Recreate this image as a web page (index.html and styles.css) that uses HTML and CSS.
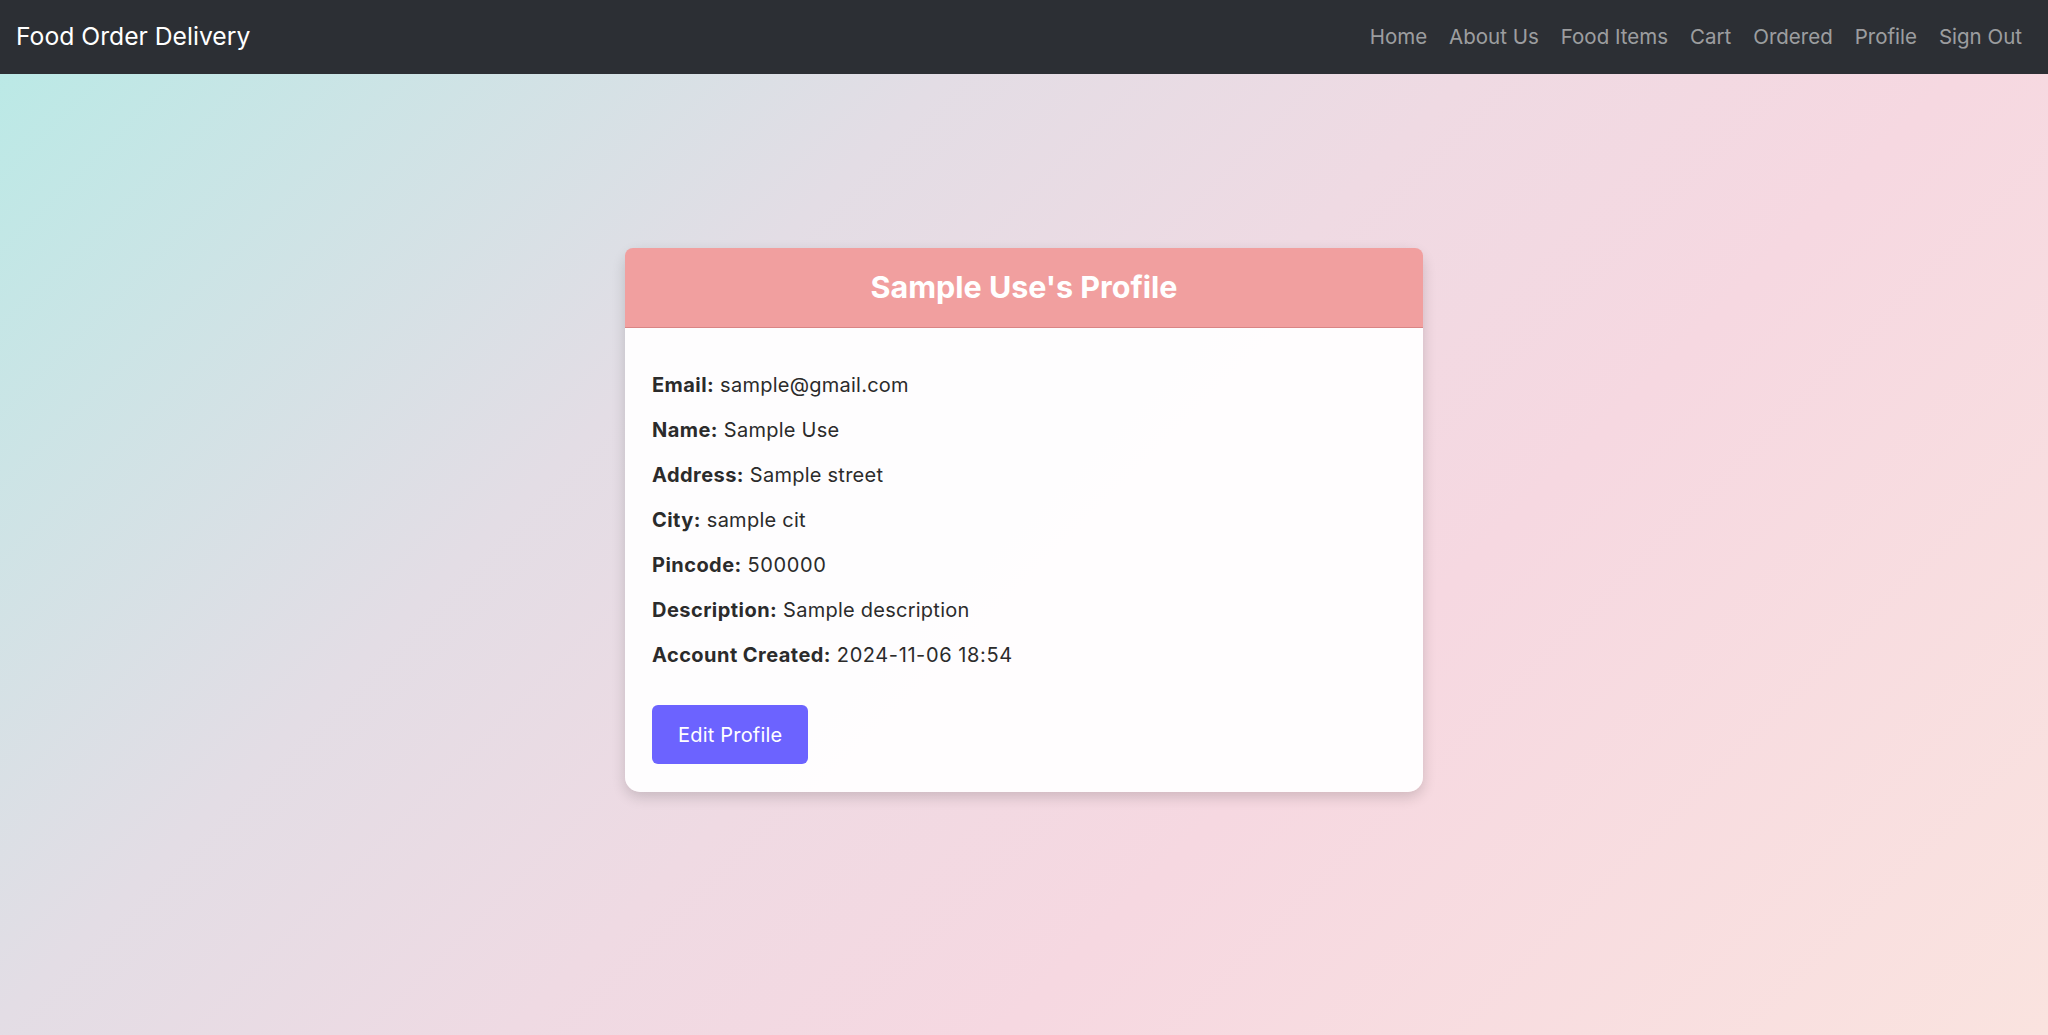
FILE: index.html
```html
<!DOCTYPE html>
<html lang="en">
<head>
<meta charset="utf-8">
<title>Profile - Food Order Delivery</title>
<link rel="stylesheet" href="styles.css">
</head>
<body>
<nav class="navbar">
  <a class="brand" href="#">Food Order Delivery</a>
  <ul class="nav-links">
    <li><a href="#">Home</a></li>
    <li><a href="#">About Us</a></li>
    <li><a href="#">Food Items</a></li>
    <li><a href="#">Cart</a></li>
    <li><a href="#">Ordered</a></li>
    <li><a href="#">Profile</a></li>
    <li><a href="#">Sign Out</a></li>
  </ul>
</nav>
<main class="page">
  <section class="card">
    <header class="card-header">
      <h3 class="card-title">Sample Use's Profile</h3>
    </header>
    <div class="card-body">
      <p class="row"><strong>Email:</strong> sample@gmail.com</p>
      <p class="row"><strong>Name:</strong> Sample Use</p>
      <p class="row"><strong>Address:</strong> Sample street</p>
      <p class="row"><strong>City:</strong> sample cit</p>
      <p class="row"><strong>Pincode:</strong> <span class="num">500000</span></p>
      <p class="row"><strong>Description:</strong> Sample description</p>
      <p class="row"><strong>Account Created:</strong> <span class="num">2024-11-06 18:54</span></p>
      <a class="btn" href="#">Edit Profile</a>
    </div>
  </section>
</main>
</body>
</html>
```
FILE: styles.css
```css
* { box-sizing: border-box; }
html, body { margin: 0; padding: 0; }
body {
  min-height: 1035px;
  font-family: Inter, "Noto Sans", sans-serif;
  font-size: 20px;
  line-height: 1.5;
  color: #2b2b2b;
  background: linear-gradient(135deg, #b8eae6 0%, #e3dde5 33%, #efdae3 50%, #f6d8e1 66%, #fae3df 100%);
  background-attachment: fixed;
}
.navbar {
  height: 74px;
  background: #2c2f34;
  display: flex;
  align-items: center;
  justify-content: space-between;
  padding: 0 15px 0 16px;
}
.brand {
  color: #fff;
  text-decoration: none;
  font-size: 24.7px;
}
.nav-links {
  list-style: none;
  margin: 0;
  padding: 0;
  display: flex;
}
.nav-links a {
  display: block;
  padding: 10px 11px;
  color: rgba(255,255,255,0.55);
  text-decoration: none;
  font-size: 20.5px;
}
.page {
  display: flex;
  justify-content: center;
  padding-top: 174px;
}
.card {
  width: 798px;
  background: rgba(255,255,255,0.94);
  border-radius: 15px;
  box-shadow: 0 5px 14px rgba(0,0,0,0.16);
}
.card-header {
  background: #f19f9f;
  border-radius: 8px 8px 0 0;
  border-bottom: 1px solid #d98585;
  height: 80px;
  display: flex;
  align-items: center;
  justify-content: center;
}
.card-title {
  margin: 0;
  color: #fff;
  font-size: 30.5px;
  font-weight: 700;
  line-height: 1.2;
}
.card-body {
  padding: 42px 27px 28px;
}
.row {
  margin: 0 0 15px;
  line-height: 30px;
  letter-spacing: 0.25px;
}
.row strong {
  font-weight: 700;
  letter-spacing: 0.45px;
}
.row .num { letter-spacing: 0.6px; }
.btn {
  display: inline-block;
  margin-top: 20px;
  padding: 14.5px 26px;
  background: #6c63ff;
  color: #fff;
  text-decoration: none;
  border-radius: 6px;
  line-height: 30px;
  font-size: 20px;
  letter-spacing: 0.2px;
}
```
